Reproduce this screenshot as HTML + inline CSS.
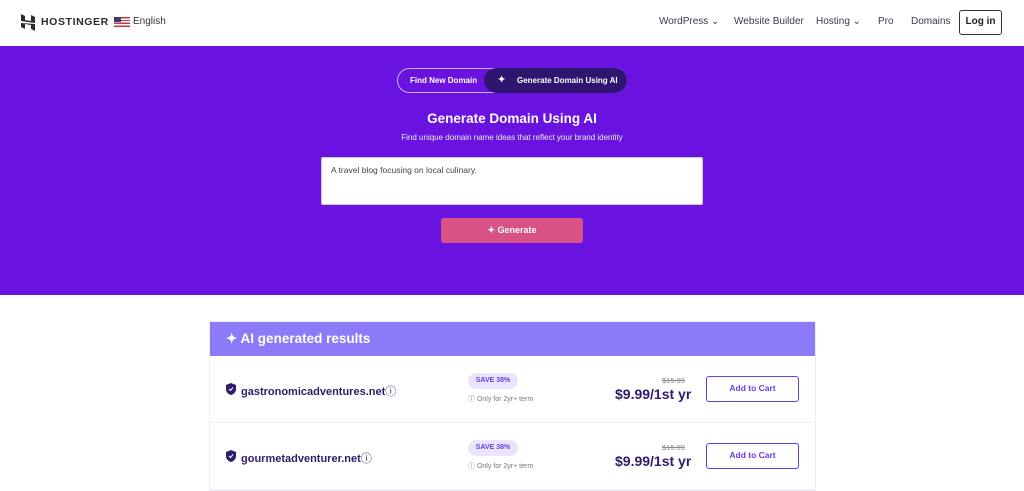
<!DOCTYPE html>
<html><head><style>
*{margin:0;padding:0;box-sizing:border-box}
body{width:1024px;height:487px;overflow:hidden;font-family:"Liberation Sans",sans-serif;background:#fff;position:relative;color:#2f1c6a}
.nav{position:absolute;top:0;left:0;width:1024px;height:46px;background:#fff}
.a{position:absolute;font-size:10px;color:#3a3a4a}
.hero{position:absolute;top:46px;left:0;width:1024px;height:249px;background:#6a12e0}
.card{position:absolute;left:209px;top:321px;width:607px;height:170px;background:#fff;border:1px solid #efeef7}
.row{position:absolute;left:0;width:605px;height:67px;border-bottom:1px solid #eeeef5}
</style></head><body>
<div class="nav">
<svg style="position:absolute;left:21px;top:14px" width="14" height="17" viewBox="0 0 14 17"><path d="M0 0l4 2v4l6 1V1l4 2v6L0 7z M0 9l14 1v7l-4-2v-4l-6-1v5l-4-2z" fill="#2b2b33"/></svg>
<div class="a" style="left:41px;top:16px;font-weight:bold;font-size:10.5px;letter-spacing:.6px;color:#2b2b33">HOSTINGER</div>
<div style="position:absolute;left:114px;top:17px;width:16px;height:10px;background:repeating-linear-gradient(#c0394a 0 1.4px,#fff 1.4px 2.8px)"><div style="width:7px;height:5px;background:#3c3b6e"></div></div>
<div class="a" style="left:133px;top:16px;color:#333">English</div>
<div class="a" style="left:659px;top:16px">WordPress ⌄</div>
<div class="a" style="left:734px;top:16px">Website Builder</div>
<div class="a" style="left:816px;top:16px">Hosting ⌄</div>
<div class="a" style="left:878px;top:16px">Pro</div>
<div class="a" style="left:911px;top:16px">Domains</div>
<div style="position:absolute;left:959px;top:10px;width:43px;height:25px;border:1.5px solid #333;border-radius:3px;font-size:10px;font-weight:bold;text-align:center;line-height:22px;color:#222">Log in</div>
</div>
<div class="hero">
<div style="position:absolute;left:397px;top:22px;width:230px;height:25px;border:1px solid #c9b3f5;border-radius:13px"></div>
<div style="position:absolute;left:410px;top:30px;font-size:8px;font-weight:bold;color:#fff">Find New Domain</div>
<div style="position:absolute;left:484px;top:22px;width:143px;height:25px;background:#2e1570;border-radius:13px;color:#fff;font-size:8px;font-weight:bold;line-height:25px;padding-left:33px">Generate Domain Using AI</div>
<div style="position:absolute;left:497px;top:27px;color:#fff;font-size:11px">✦</div>
<div style="position:absolute;left:0;width:1024px;top:65px;text-align:center;color:#fff;font-size:13.5px;font-weight:bold">Generate Domain Using AI</div>
<div style="position:absolute;left:0;width:1024px;top:87px;text-align:center;color:#eee;font-size:8px">Find unique domain name ideas that reflect your brand identity</div>
<div style="position:absolute;left:321px;top:111px;width:382px;height:48px;background:#fff;border:1px solid #ccc;border-radius:2px;font-size:8.5px;color:#444;padding:7px 9px">A travel blog focusing on local culinary.</div>
<div style="position:absolute;left:441px;top:172px;width:142px;height:25px;background:#d95285;border-radius:3px;color:#fff;font-size:9px;font-weight:bold;text-align:center;line-height:25px">✦ Generate</div>
</div>
<div class="card">
<div style="position:absolute;left:0;top:0;width:605px;height:34px;background:#8c7bf8;color:#fff;font-size:13.5px;font-weight:bold;line-height:34px;padding-left:16px">✦ AI generated results</div>
<div class="row" style="top:34px">
<svg style="position:absolute;left:16px;top:27px" width="10" height="12" viewBox="0 0 10 12"><path d="M5 0L0 2v4c0 3 2 5 5 6 3-1 5-3 5-6V2z" fill="#2f1c6a"/><path d="M3 6l1.5 1.5L7 4.5" stroke="#fff" fill="none"/></svg>
<div style="position:absolute;left:31px;top:27px;font-size:11px;font-weight:bold">gastronomicadventures.net<span style="font-weight:normal">ⓘ</span></div>
<div style="position:absolute;left:258px;top:17px;width:50px;height:16px;border-radius:8px;background:#ebe4ff;color:#673de6;font-size:7px;font-weight:bold;text-align:center;line-height:16px">SAVE 38%</div>
<div style="position:absolute;left:258px;top:38px;font-size:7px;color:#777">ⓘ Only for 2yr+ term</div>
<div style="position:absolute;left:452px;top:20px;font-size:7.5px;color:#888;text-decoration:line-through">$15.99</div>
<div style="position:absolute;left:405px;top:30px;font-size:14px;font-weight:bold">$9.99/1st yr</div>
<div style="position:absolute;left:496px;top:20px;width:93px;height:26px;border:1.5px solid #673de6;border-radius:3px;color:#673de6;font-size:8.5px;font-weight:bold;text-align:center;line-height:23px">Add to Cart</div>
</div>
<div class="row" style="top:101px">
<svg style="position:absolute;left:16px;top:27px" width="10" height="12" viewBox="0 0 10 12"><path d="M5 0L0 2v4c0 3 2 5 5 6 3-1 5-3 5-6V2z" fill="#2f1c6a"/><path d="M3 6l1.5 1.5L7 4.5" stroke="#fff" fill="none"/></svg>
<div style="position:absolute;left:31px;top:27px;font-size:11px;font-weight:bold">gourmetadventurer.net<span style="font-weight:normal">ⓘ</span></div>
<div style="position:absolute;left:258px;top:17px;width:50px;height:16px;border-radius:8px;background:#ebe4ff;color:#673de6;font-size:7px;font-weight:bold;text-align:center;line-height:16px">SAVE 38%</div>
<div style="position:absolute;left:258px;top:38px;font-size:7px;color:#777">ⓘ Only for 2yr+ term</div>
<div style="position:absolute;left:452px;top:20px;font-size:7.5px;color:#888;text-decoration:line-through">$15.99</div>
<div style="position:absolute;left:405px;top:30px;font-size:14px;font-weight:bold">$9.99/1st yr</div>
<div style="position:absolute;left:496px;top:20px;width:93px;height:26px;border:1.5px solid #673de6;border-radius:3px;color:#673de6;font-size:8.5px;font-weight:bold;text-align:center;line-height:23px">Add to Cart</div>
</div>
</div>
</body></html>
